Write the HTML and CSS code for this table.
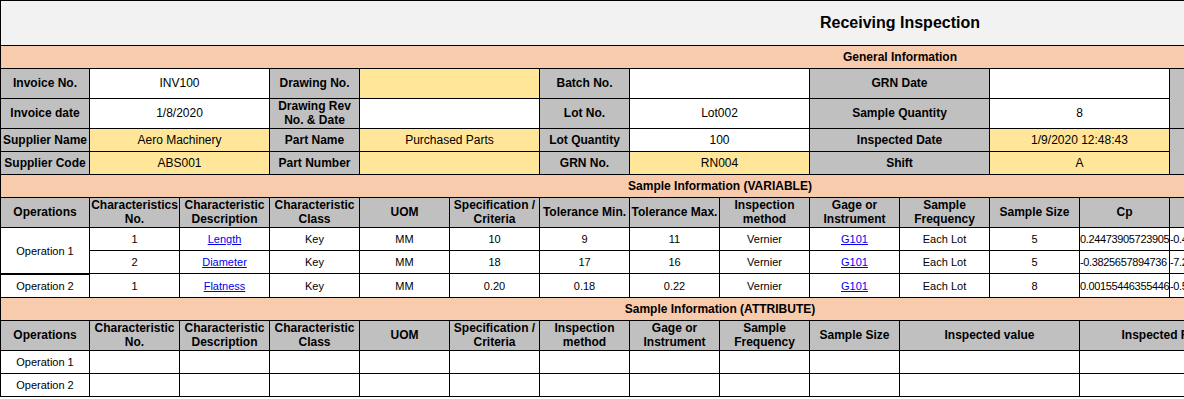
FILE: index.html
```html
<!DOCTYPE html>
<html lang="en">
<head>
<meta charset="utf-8">
<title>Receiving Inspection</title>
<link rel="stylesheet" href="styles.css">
</head>
<body>
<div class="sheet">
  <div class="grid general">
    <div class="c title">Receiving Inspection</div>
    <div class="c band">General Information</div>

    <div class="c lbl">Invoice No.</div>
    <div class="c val s2">INV100</div>
    <div class="c lbl">Drawing No.</div>
    <div class="c yel s2"></div>
    <div class="c lbl">Batch No.</div>
    <div class="c val s2"></div>
    <div class="c lbl s2">GRN Date</div>
    <div class="c val s2"></div>
    <div class="c lbl s2 r2"></div>
    <div class="c val s5 r2"></div>

    <div class="c lbl">Invoice date</div>
    <div class="c val s2">1/8/2020</div>
    <div class="c lbl">Drawing Rev No. &amp; Date</div>
    <div class="c val s2"></div>
    <div class="c lbl">Lot No.</div>
    <div class="c val s2">Lot002</div>
    <div class="c lbl s2">Sample Quantity</div>
    <div class="c val s2">8</div>

    <div class="c lbl">Supplier Name</div>
    <div class="c yel s2">Aero Machinery</div>
    <div class="c lbl">Part Name</div>
    <div class="c yel s2">Purchased Parts</div>
    <div class="c lbl">Lot Quantity</div>
    <div class="c val s2">100</div>
    <div class="c lbl s2">Inspected Date</div>
    <div class="c yel s2">1/9/2020 12:48:43</div>
    <div class="c lbl s2 r2"></div>
    <div class="c val s5 r2"></div>

    <div class="c lbl">Supplier Code</div>
    <div class="c yel s2">ABS001</div>
    <div class="c lbl">Part Number</div>
    <div class="c yel s2"></div>
    <div class="c lbl">GRN No.</div>
    <div class="c yel s2">RN004</div>
    <div class="c lbl s2">Shift</div>
    <div class="c yel s2">A</div>
  </div>

  <div class="grid variable">
    <div class="c band">Sample Information (VARIABLE)</div>

    <div class="c lbl">Operations</div>
    <div class="c lbl">Characteristics No.</div>
    <div class="c lbl">Characteristic Description</div>
    <div class="c lbl">Characteristic Class</div>
    <div class="c lbl">UOM</div>
    <div class="c lbl">Specification / Criteria</div>
    <div class="c lbl">Tolerance Min.</div>
    <div class="c lbl">Tolerance Max.</div>
    <div class="c lbl">Inspection method</div>
    <div class="c lbl">Gage or Instrument</div>
    <div class="c lbl">Sample Frequency</div>
    <div class="c lbl">Sample Size</div>
    <div class="c lbl">Cp</div>
    <div class="c lbl"></div>
    <div class="c lbl"></div>
    <div class="c lbl"></div>

    <div class="c d r2">Operation 1</div>
    <div class="c d">1</div>
    <div class="c d"><a href="#">Length</a></div>
    <div class="c d">Key</div>
    <div class="c d">MM</div>
    <div class="c d">10</div>
    <div class="c d">9</div>
    <div class="c d">11</div>
    <div class="c d">Vernier</div>
    <div class="c d"><a href="#">G101</a></div>
    <div class="c d">Each Lot</div>
    <div class="c d">5</div>
    <div class="c d num">0.24473905723905</div>
    <div class="c d num">-0.4</div>
    <div class="c d num"></div>
    <div class="c d num"></div>

    <div class="c d">2</div>
    <div class="c d"><a href="#">Diameter</a></div>
    <div class="c d">Key</div>
    <div class="c d">MM</div>
    <div class="c d">18</div>
    <div class="c d">17</div>
    <div class="c d">16</div>
    <div class="c d">Vernier</div>
    <div class="c d"><a href="#">G101</a></div>
    <div class="c d">Each Lot</div>
    <div class="c d">5</div>
    <div class="c d num">-0.3825657894736</div>
    <div class="c d num">-7.2</div>
    <div class="c d num"></div>
    <div class="c d num"></div>

    <div class="c d op2">Operation 2</div>
    <div class="c d">1</div>
    <div class="c d"><a href="#">Flatness</a></div>
    <div class="c d">Key</div>
    <div class="c d">MM</div>
    <div class="c d">0.20</div>
    <div class="c d">0.18</div>
    <div class="c d">0.22</div>
    <div class="c d">Vernier</div>
    <div class="c d"><a href="#">G101</a></div>
    <div class="c d">Each Lot</div>
    <div class="c d">8</div>
    <div class="c d num">0.00155446355446</div>
    <div class="c d num">-0.5</div>
    <div class="c d num"></div>
    <div class="c d num"></div>
  </div>

  <div class="grid attribute">
    <div class="c band">Sample Information (ATTRIBUTE)</div>

    <div class="c lbl">Operations</div>
    <div class="c lbl">Characteristic No.</div>
    <div class="c lbl">Characteristic Description</div>
    <div class="c lbl">Characteristic Class</div>
    <div class="c lbl">UOM</div>
    <div class="c lbl">Specification / Criteria</div>
    <div class="c lbl">Inspection method</div>
    <div class="c lbl">Gage or Instrument</div>
    <div class="c lbl">Sample Frequency</div>
    <div class="c lbl">Sample Size</div>
    <div class="c lbl">Inspected value</div>
    <div class="c lbl">Inspected Result</div>
    <div class="c lbl"></div>

    <div class="c d">Operation 1</div>
    <div class="c d"></div><div class="c d"></div><div class="c d"></div>
    <div class="c d"></div><div class="c d"></div><div class="c d"></div>
    <div class="c d"></div><div class="c d"></div><div class="c d"></div>
    <div class="c d"></div><div class="c d"></div><div class="c d"></div>

    <div class="c d">Operation 2</div>
    <div class="c d"></div><div class="c d"></div><div class="c d"></div>
    <div class="c d"></div><div class="c d"></div><div class="c d"></div>
    <div class="c d"></div><div class="c d"></div><div class="c d"></div>
    <div class="c d"></div><div class="c d"></div><div class="c d"></div>
  </div>
</div>
</body>
</html>
```

FILE: styles.css
```css
* {
  box-sizing: border-box;
}

html,
body {
  margin: 0;
  padding: 0;
  background: #ffffff;
}

.sheet {
  width: 1184px;
  height: 399px;
  overflow: hidden;
  font-family: "Liberation Sans", Arial, sans-serif;
  font-size: 12px;
  color: #000000;
}

.grid {
  display: grid;
  width: max-content;
  border-left: 1px solid #000000;
}

.general {
  grid-template-columns: 89px repeat(19, 90px);
  grid-template-rows: 45px 23px 30px 30px 23px 23px;
  border-top: 1px solid #000000;
}

.variable {
  grid-template-columns: 89px repeat(15, 90px);
  grid-template-rows: 23px 30px 23px 23px 24px;
}

.attribute {
  grid-template-columns: 89px repeat(9, 90px) 180px 180px 180px;
  grid-template-rows: 23px 30px 23px 23px;
}

.c {
  display: flex;
  align-items: center;
  justify-content: center;
  text-align: center;
  line-height: 14px;
  padding-bottom: 1px;
  border-right: 1px solid #000000;
  border-bottom: 1px solid #000000;
  overflow: hidden;
  min-width: 0;
}

.title {
  grid-column: 1 / -1;
  background: #f2f2f2;
  font-size: 16px;
  font-weight: bold;
  padding-bottom: 0;
}

.band {
  grid-column: 1 / -1;
  background: #f8cbad;
  font-weight: bold;
}

.lbl {
  background: #c0c0c0;
  font-weight: bold;
}

.val {
  background: #ffffff;
}

.yel {
  background: #ffe699;
}

.s2 {
  grid-column: span 2;
}

.s5 {
  grid-column: span 5;
}

.r2 {
  grid-row: span 2;
}

.d {
  background: #ffffff;
  font-size: 11px;
  padding-bottom: 0;
}

.d a {
  color: #0000ee;
  text-decoration: underline;
}

.num {
  justify-content: flex-start;
  white-space: nowrap;
  text-align: left;
  letter-spacing: -0.35px;
}

.op2 {
  box-shadow: inset 0 1px 0 #000000;
}
```
